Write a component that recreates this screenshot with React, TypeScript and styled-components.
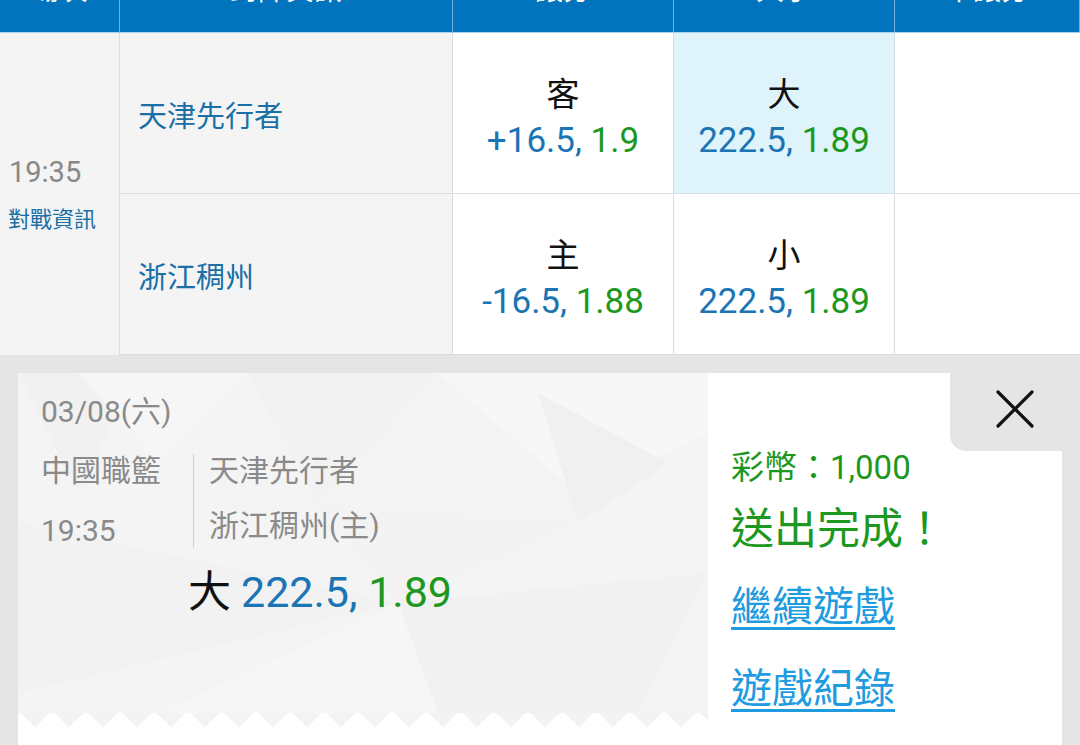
import { FC } from "react";
import styled, { createGlobalStyle } from "styled-components";

const FONT = `"Roboto", "Noto Sans CJK TC", sans-serif`;
const BLUE = "#1b74b3";
const GREEN = "#1c981e";
const LINE = "#d6dee4";

const GlobalStyle = createGlobalStyle`
  html, body {
    margin: 0;
    padding: 0;
    background: #ffffff;
  }
  body {
    width: 1080px;
    height: 745px;
    overflow: hidden;
    font-family: ${FONT};
  }
  * {
    box-sizing: border-box;
  }
`;

const Odds: FC<{ line: string; price: string }> = ({ line, price }) => (
  <OddsText>
    <Num>{line}, </Num>
    <Price>{price}</Price>
  </OddsText>
);

const headers = ["場次", "對陣資訊", "讓分", "大小", "不讓分"];

const rows = [
  {
    team: "天津先行者",
    spreadSide: "客",
    spread: "+16.5",
    spreadPrice: "1.9",
    totalSide: "大",
    total: "222.5",
    totalPrice: "1.89",
    picked: true
  },
  {
    team: "浙江稠州",
    spreadSide: "主",
    spread: "-16.5",
    spreadPrice: "1.88",
    totalSide: "小",
    total: "222.5",
    totalPrice: "1.89",
    picked: false
  }
];

export default function App() {
  return (
    <>
      <GlobalStyle />
      <Page>
        <Table>
          {headers.map((h) => (
            <HeadCell key={h}>
              <span>{h}</span>
            </HeadCell>
          ))}
          <TimeCell>
            <Time>19:35</Time>
            <InfoLink>對戰資訊</InfoLink>
          </TimeCell>
          {rows.map((r) => (
            <Row key={r.team}>
              <TeamCell>{r.team}</TeamCell>
              <OddsCell>
                <Side>{r.spreadSide}</Side>
                <Odds line={r.spread} price={r.spreadPrice} />
              </OddsCell>
              <OddsCell picked={r.picked}>
                <Side>{r.totalSide}</Side>
                <Odds line={r.total} price={r.totalPrice} />
              </OddsCell>
              <OddsCell />
            </Row>
          ))}
        </Table>

        <Overlay>
          <Panel>
            <Ticket>
              <TicketPattern viewBox="0 0 690 340" preserveAspectRatio="none">
                <polygon points="0,0 120,0 60,120" fill="#f1f1f1" />
                <polygon points="60,0 230,0 140,90" fill="#f6f6f6" />
                <polygon points="230,0 420,0 300,130" fill="#f2f2f2" />
                <polygon points="420,0 690,0 690,60 560,120" fill="#f7f7f7" />
                <polygon points="520,20 650,90 560,150" fill="#f0f0f0" />
                <polygon points="0,150 380,230 0,320" fill="#f2f2f2" />
                <polygon points="380,230 690,200 620,340 420,340" fill="#f1f1f1" />
                <polygon points="140,340 380,230 420,340" fill="#f6f6f6" />
                <polygon points="300,130 560,150 380,230" fill="#f3f3f3" />
              </TicketPattern>
              <TicketBody>
                <DateLine>03/08(六)</DateLine>
                <MatchInfo>
                  <League>
                    <GrayLine>中國職籃</GrayLine>
                    <GrayLine>19:35</GrayLine>
                  </League>
                  <Teams>
                    <GrayLine>天津先行者</GrayLine>
                    <GrayLine>浙江稠州(主)</GrayLine>
                  </Teams>
                </MatchInfo>
                <Bet>
                  <BetSide>大</BetSide>
                  <Num>222.5, </Num>
                  <Price>1.89</Price>
                </Bet>
              </TicketBody>
              <ZigZag />
            </Ticket>

            <Result>
              <CloseTab aria-label="close">
                <svg width="40" height="40" viewBox="0 0 40 40">
                  <path
                    d="M3 3 L37 37 M37 3 L3 37"
                    stroke="#111"
                    strokeWidth="3.2"
                    strokeLinecap="round"
                  />
                </svg>
              </CloseTab>
              <ResultBody>
                <Coins>彩幣：1,000</Coins>
                <Done>送出完成！</Done>
                <ActionLink href="#">繼續遊戲</ActionLink>
                <ActionLink href="#">遊戲紀錄</ActionLink>
              </ResultBody>
            </Result>
          </Panel>
        </Overlay>
      </Page>
    </>
  );
}

const Page = styled.div`
  width: 1080px;
  height: 745px;
  display: flex;
  flex-direction: column;
  overflow: hidden;
`;

const Table = styled.div`
  display: grid;
  grid-template-columns: 120px 333px 221px 221px 185px;
  grid-template-rows: 33px 161px 161px;
  flex: none;
`;

const HeadCell = styled.div`
  background: #0274bd;
  color: #ffffff;
  font-size: 28px;
  line-height: 30px;
  display: flex;
  align-items: flex-end;
  justify-content: center;
  padding-bottom: 26px;
  overflow: hidden;
  border-right: 1px solid #6fb0dc;
  border-bottom: 1px solid #a8d4ef;

  &:last-of-type {
    border-right: none;
  }
`;

const TimeCell = styled.div`
  grid-row: 2 / span 2;
  grid-column: 1;
  background: #f4f4f4;
  border-right: 1px solid ${LINE};
  display: flex;
  flex-direction: column;
  justify-content: center;
  padding: 0 0 0 9px;
  gap: 18px;
`;

const Time = styled.div`
  font-size: 29px;
  line-height: 34px;
  color: #888888;
`;

const InfoLink = styled.div`
  font-size: 22px;
  line-height: 26px;
  color: #1a6fa6;
  margin-left: -1px;
`;

const Row = styled.div`
  display: contents;
`;

const TeamCell = styled.div`
  background: #f4f4f4;
  border-right: 1px solid ${LINE};
  border-bottom: 1px solid ${LINE};
  display: flex;
  align-items: center;
  padding: 2px 0 0 18px;
  font-size: 29px;
  color: #1a6fa6;
`;

const OddsCell = styled.div<{ picked?: boolean }>`
  background: ${(p) => (p.picked ? "#dff3fb" : "#ffffff")};
  border-right: 1px solid ${LINE};
  border-bottom: 1px solid ${LINE};
  display: flex;
  flex-direction: column;
  align-items: center;
  justify-content: center;
  padding-top: 12px;

  &:last-child {
    border-right: none;
  }
`;

const Side = styled.div`
  font-size: 33px;
  line-height: 40px;
  color: #111111;
`;

const OddsText = styled.div`
  font-size: 35px;
  line-height: 44px;
  margin-top: 4px;
`;

const Num = styled.span`
  color: ${BLUE};
`;

const Price = styled.span`
  color: ${GREEN};
`;

const Overlay = styled.div`
  flex: 1;
  background: #e5e5e5;
  padding: 18px 18px 0;
  display: flex;
`;

const Panel = styled.div`
  flex: 1;
  background: #ffffff;
  display: flex;
  align-items: flex-start;
`;

const Ticket = styled.div`
  position: relative;
  width: 690px;
  display: flex;
  flex-direction: column;
`;

const TicketPattern = styled.svg`
  position: absolute;
  left: 0;
  top: 0;
  width: 100%;
  height: 340px;
  background: #f4f4f4;
`;

const TicketBody = styled.div`
  position: relative;
  height: 338px;
  padding: 22px 0 0 23px;
  color: #8a8a8a;
`;

const DateLine = styled.div`
  font-size: 30px;
  line-height: 34px;
`;

const MatchInfo = styled.div`
  display: flex;
  margin-top: 25px;
`;

const League = styled.div`
  width: 153px;
  display: flex;
  flex-direction: column;
  gap: 26px;
  border-right: 1px solid #cfcfcf;
`;

const Teams = styled.div`
  display: flex;
  flex-direction: column;
  gap: 21px;
  padding-left: 15px;
`;

const GrayLine = styled.div`
  font-size: 30px;
  line-height: 34px;
  color: #8a8a8a;
`;

const Bet = styled.div`
  margin: 19px 0 0 147px;
  font-size: 43px;
  line-height: 50px;
`;

const BetSide = styled.span`
  color: #111111;
  margin-right: 10px;
`;

const ZigZag = styled.div`
  height: 16px;
  background: conic-gradient(from -45deg at 50% 100%, #f3f3f3 90deg, transparent 0deg);
  background-size: 34px 100%;
`;

const Result = styled.div`
  flex: 1;
  display: flex;
  flex-direction: column;
`;

const CloseTab = styled.button`
  align-self: flex-end;
  width: 112px;
  height: 78px;
  border: none;
  background: #e5e5e5;
  border-bottom-left-radius: 16px;
  display: flex;
  align-items: center;
  justify-content: center;
  padding: 0 0 6px 18px;
  cursor: pointer;
`;

const ResultBody = styled.div`
  display: flex;
  flex-direction: column;
  align-items: flex-start;
  padding-left: 23px;
`;

const Coins = styled.div`
  font-size: 33px;
  line-height: 34px;
  color: ${GREEN};
`;

const Done = styled.div`
  font-size: 43px;
  line-height: 50px;
  color: ${GREEN};
  margin-top: 19px;
`;

const ActionLink = styled.a`
  font-size: 41px;
  line-height: 50px;
  color: #1f9be0;
  text-decoration: underline;
  text-decoration-thickness: 3px;
  text-underline-offset: 6px;
  margin-top: 28px;

  & + & {
    margin-top: 32px;
  }
`;
